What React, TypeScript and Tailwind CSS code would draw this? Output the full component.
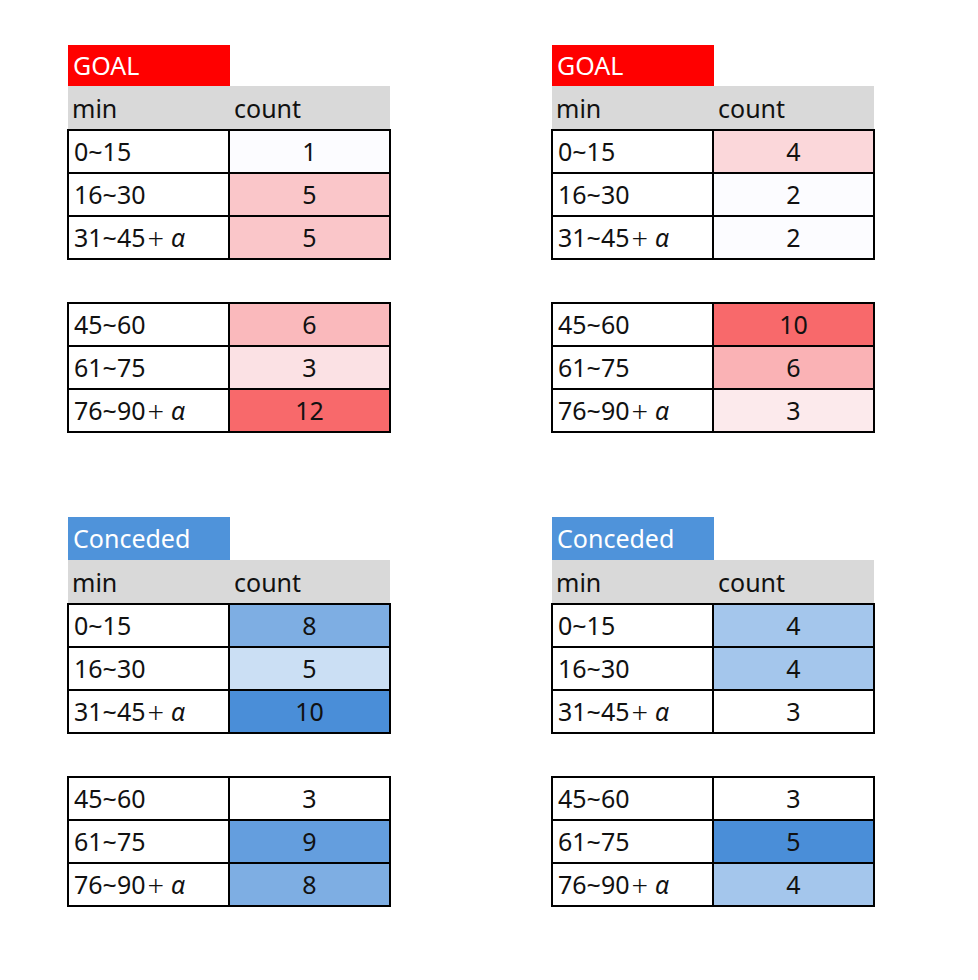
import React from 'react';

type Row = { min: React.ReactNode; count: number; bg: string };

const alpha = (base: string) => (
    <>
        {base}
        <span className="ml-[2px] mr-[7px] text-[29px] font-light">+</span>
        <span className="italic">α</span>
    </>
);

const ROW_MINS_A = ['0~15', '16~30', alpha('31~45')];
const ROW_MINS_B = ['45~60', '61~75', alpha('76~90')];

interface StatTableProps {
    label: string;
    labelBg: string;
    labelH: string;
    first: Row[];
    second: Row[];
}

const RowGroup: React.FC<{ rows: Row[] }> = ({ rows }) => (
    <div className="border-2 border-black w-[324px]">
        {rows.map((row, i) => (
            <div key={i} className={`flex ${i > 0 ? 'h-[43px] border-t-2 border-black' : 'h-[41px]'}`}>
                <div className="w-[161px] flex items-center pl-[5px] bg-white border-r-2 border-black">
                    {row.min}
                </div>
                <div className={`flex-1 flex items-center justify-center ${row.bg}`}>{row.count}</div>
            </div>
        ))}
    </div>
);

const StatTable: React.FC<StatTableProps> = ({ label, labelBg, labelH, first, second }) => (
    <div className="flex flex-col">
        {/* Title tag */}
        <div className={`w-[162px] ml-[1px] flex items-center pl-[5px] text-white ${labelH} ${labelBg}`}>
            {label}
        </div>

        {/* Column header */}
        <div className="flex h-[43px] ml-[1px] w-[322px] bg-[#d9d9d9]">
            <div className="w-[161px] flex items-center pl-[4px] pt-[2px]">min</div>
            <div className="flex-1 flex items-center pl-[5px] pt-[2px]">count</div>
        </div>

        <RowGroup rows={first} />
        <div className="h-[42px]" />
        <RowGroup rows={second} />
    </div>
);

const build = (mins: React.ReactNode[], counts: number[], bgs: string[]): Row[] =>
    mins.map((min, i) => ({ min, count: counts[i], bg: bgs[i] }));

export default function App() {
    return (
        <div
            className="w-[978px] h-[980px] bg-white text-[#111] text-[25px] leading-none"
            style={{ fontFamily: '"Noto Sans", "Noto Sans CJK JP", sans-serif' }}
        >
            <div className="grid grid-cols-[324px_324px] gap-x-[160px] gap-y-[84px] pl-[67px] pt-[45px]">
                <StatTable
                    label="GOAL"
                    labelBg="bg-[#ff0000]"
                    labelH="h-[41px]"
                    first={build(ROW_MINS_A, [1, 5, 5], ['bg-[#fcfcff]', 'bg-[#fac6c9]', 'bg-[#fac6c9]'])}
                    second={build(ROW_MINS_B, [6, 3, 12], ['bg-[#fab9bc]', 'bg-[#fbe1e4]', 'bg-[#f8696b]'])}
                />
                <StatTable
                    label="GOAL"
                    labelBg="bg-[#ff0000]"
                    labelH="h-[41px]"
                    first={build(ROW_MINS_A, [4, 2, 2], ['bg-[#fbd7da]', 'bg-[#fcfcff]', 'bg-[#fcfcff]'])}
                    second={build(ROW_MINS_B, [10, 6, 3], ['bg-[#f8696b]', 'bg-[#fab2b5]', 'bg-[#fceaec]'])}
                />
                <StatTable
                    label="Conceded"
                    labelBg="bg-[#4f93da]"
                    labelH="h-[43px]"
                    first={build(ROW_MINS_A, [8, 5, 10], ['bg-[#7eaee3]', 'bg-[#cbdff4]', 'bg-[#4a8ed8]'])}
                    second={build(ROW_MINS_B, [3, 9, 8], ['bg-white', 'bg-[#649ede]', 'bg-[#7eaee3]'])}
                />
                <StatTable
                    label="Conceded"
                    labelBg="bg-[#4f93da]"
                    labelH="h-[43px]"
                    first={build(ROW_MINS_A, [4, 4, 3], ['bg-[#a4c6ec]', 'bg-[#a4c6ec]', 'bg-white'])}
                    second={build(ROW_MINS_B, [3, 5, 4], ['bg-white', 'bg-[#4a8ed8]', 'bg-[#a4c6ec]'])}
                />
            </div>
        </div>
    );
}
